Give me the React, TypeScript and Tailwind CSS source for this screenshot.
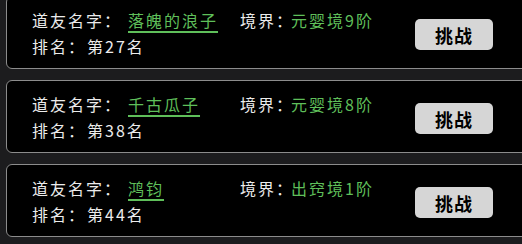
const rows = [
  { name: '落魄的浪子', realm: '元婴境9阶', rank: 27 },
  { name: '千古瓜子', realm: '元婴境8阶', rank: 38 },
  { name: '鸿钧', realm: '出窍境1阶', rank: 44 },
];

const font = { fontFamily: '"Noto Sans CJK SC", "Noto Sans", sans-serif' };

function Card({ name, realm, rank }: { name: string; realm: string; rank: number }) {
  return (
    <div className="flex items-start h-[73px] w-[540px] ml-[6px] shrink-0 rounded-[6px] border-[1.5px] border-[#8c8c8c] bg-black pl-[25px] pt-[10px]">
      <div className="w-[383px] text-[16px] leading-[26px] tracking-[2px] text-[#ececec]">
        <div className="flex">
          <span className="w-[96px]">道友名字：</span>
          <span className="w-[112px]">
            <span className="text-[#5fbf5a] underline decoration-[#5fbf5a] decoration-[1.5px] underline-offset-[4px]">{name}</span>
          </span>
          <span>境界：</span>
          <span className="text-[#5fbf5a] -ml-[3px]">{realm}</span>
        </div>
        <div className="flex">
          <span>排名：</span>
          <span className="ml-[1px]">第{rank}名</span>
        </div>
      </div>
      <button className="mt-[12px] w-[78px] h-[31px] rounded-[5px] bg-[#d6d6d6] text-[18px] font-bold text-black leading-none tracking-[1px]">
        挑战
      </button>
    </div>
  );
}

export default function App() {
  return (
    <div className="w-[522px] h-[244px] overflow-hidden bg-[#1c1c1e]" style={font}>
      <div className="flex flex-col gap-[11px] -mt-[4px]">
        {rows.map((r) => (
          <Card key={r.rank} {...r} />
        ))}
      </div>
    </div>
  );
}
